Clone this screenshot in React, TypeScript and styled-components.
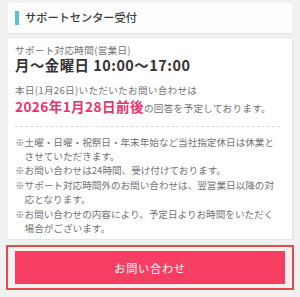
import React from "react";
import styled, { createGlobalStyle } from "styled-components";

const Global = createGlobalStyle`
  html, body { margin: 0; padding: 0; background: #f1f1f1; }
  body { font-family: "Noto Sans CJK JP", "Noto Sans", sans-serif; }
  * { box-sizing: border-box; }
`;

const Page = styled.div`
  width: 300px;
  height: 297px;
  padding: 3px 8px 0;
  display: flex;
  flex-direction: column;
  overflow: hidden;
`;

const Header = styled.div`
  height: 31px;
  background: #fdfdfd;
  border-bottom: 1px solid #e2e2e2;
  display: flex;
  align-items: center;
  gap: 6px;
  padding-left: 7px;
`;

const Accent = styled.span`
  width: 4px;
  height: 14px;
  background: #5cbfd5;
`;

const Title = styled.h1`
  margin: 0;
  font-size: 11.2px;
  font-weight: 500;
  color: #3a3a3a;
  line-height: 1;
`;

const Card = styled.section`
  margin-top: 5px;
  background: #fff;
  box-shadow: 2px 1px 0 #e6e6e6;
  padding: 5px 12px 4px 7px;
  display: flex;
  flex-direction: column;
`;

const Label = styled.div<{ $gap?: number }>`
  font-size: 9.6px;
  line-height: ${(p) => (p.$gap ? "14.4px" : "12px")};
  color: #737373;
  letter-spacing: 0.3px;
  margin-top: ${(p) => p.$gap ?? 0}px;
`;

const Hours = styled.div`
  font-size: 14.4px;
  line-height: 18px;
  font-weight: 700;
  color: #333;
  letter-spacing: 0.5px;
`;

const Answer = styled.div`
  font-size: 9.6px;
  line-height: 19.2px;
  color: #737373;
  letter-spacing: 0.3px;
`;

const Highlight = styled.strong`
  font-size: 13.6px;
  font-weight: 700;
  color: #e8336a;
  letter-spacing: 0.4px;
`;

const Divider = styled.hr`
  margin: 7px 0 0;
  border: 0;
  border-top: 1px dashed #dcdcdc;
  height: 0;
`;

const Notes = styled.ul`
  list-style: none;
  margin: 8px 0 0;
  padding: 0;
`;

const Note = styled.li`
  font-size: 9.6px;
  line-height: 14.4px;
  color: #737373;
  padding-left: 1em;
  text-indent: -1em;
`;

const ButtonFrame = styled.div`
  margin: 6px -2px 0;
  border: 2px solid #dd4f4f;
  background: #fbeff0;
  padding: 4px 7px;
`;

const Button = styled.button`
  width: 100%;
  height: 33px;
  border: 0;
  background: #f63e62;
  color: #fff;
  font-family: inherit;
  font-size: 11.2px;
  letter-spacing: 0.7px;
  cursor: pointer;
`;

const notes = [
  "※土曜・日曜・祝祭日・年末年始など当社指定休日は休業とさせていただきます。",
  "※お問い合わせは24時間、受け付けております。",
  "※サポート対応時間外のお問い合わせは、翌営業日以降の対応となります。",
  "※お問い合わせの内容により、予定日よりお時間をいただく場合がございます。",
];

export default function App() {
  return (
    <>
      <Global />
      <Page>
        <Header>
          <Accent />
          <Title>サポートセンター受付</Title>
        </Header>
        <Card>
          <Label>サポート対応時間(営業日)</Label>
          <Hours>月〜金曜日 10:00〜17:00</Hours>
          <Label $gap={9}>本日(1月26日)いただいたお問い合わせは</Label>
          <Answer>
            <Highlight>2026年1月28日前後</Highlight>の回答を予定しております。
          </Answer>
          <Divider />
          <Notes>
            {notes.map((n) => (
              <Note key={n}>{n}</Note>
            ))}
          </Notes>
        </Card>
        <ButtonFrame>
          <Button type="button">お問い合わせ</Button>
        </ButtonFrame>
      </Page>
    </>
  );
}
